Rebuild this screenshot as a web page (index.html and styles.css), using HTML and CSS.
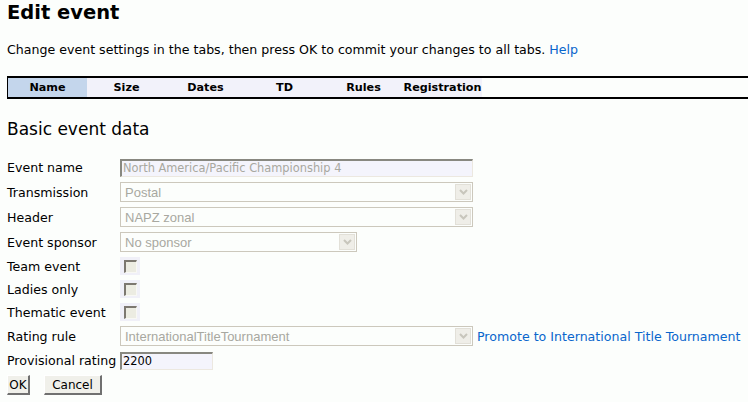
FILE: index.html
```html
<!DOCTYPE html>
<html>
<head>
<meta charset="utf-8">
<link rel="stylesheet" href="styles.css">
</head>
<body>
<h1 class="title">Edit event</h1>
<p class="intro">Change event settings in the tabs, then press OK to commit your changes to all tabs. <a class="link" href="#">Help</a></p>
<div class="tabs">
  <div class="tab active">Name</div>
  <div class="tab">Size</div>
  <div class="tab">Dates</div>
  <div class="tab">TD</div>
  <div class="tab">Rules</div>
  <div class="tab">Registration</div>
</div>
<h2 class="section">Basic event data</h2>
<div class="form">
  <div class="row"><span class="label">Event name</span><span class="field text wide">North America/Pacific Championship 4</span></div>
  <div class="row sel"><span class="label">Transmission</span><span class="field select wide"><span class="val">Postal</span><span class="arrow"><svg width="9" height="6" viewBox="0 0 9 6"><path d="M1 1 L4.5 4.5 L8 1" fill="none" stroke="#c8c6bc" stroke-width="2"/></svg></span></span></div>
  <div class="row sel"><span class="label">Header</span><span class="field select wide"><span class="val">NAPZ zonal</span><span class="arrow"><svg width="9" height="6" viewBox="0 0 9 6"><path d="M1 1 L4.5 4.5 L8 1" fill="none" stroke="#c8c6bc" stroke-width="2"/></svg></span></span></div>
  <div class="row sel"><span class="label">Event sponsor</span><span class="field select mid"><span class="val">No sponsor</span><span class="arrow"><svg width="9" height="6" viewBox="0 0 9 6"><path d="M1 1 L4.5 4.5 L8 1" fill="none" stroke="#c8c6bc" stroke-width="2"/></svg></span></span></div>
  <div class="row chk"><span class="label">Team event</span><span class="check"><span class="box"></span></span></div>
  <div class="row chk"><span class="label">Ladies only</span><span class="check"><span class="box"></span></span></div>
  <div class="row chk"><span class="label">Thematic event</span><span class="check"><span class="box"></span></span></div>
  <div class="row sel"><span class="label">Rating rule</span><span class="field select wide"><span class="val">InternationalTitleTournament</span><span class="arrow"><svg width="9" height="6" viewBox="0 0 9 6"><path d="M1 1 L4.5 4.5 L8 1" fill="none" stroke="#c8c6bc" stroke-width="2"/></svg></span></span><a class="link promote" href="#">Promote to International Title Tournament</a></div>
  <div class="row"><span class="label">Provisional rating</span><span class="field text short active-input">2200</span></div>
</div>
<div class="buttons">
  <button class="btn ok">OK</button>
  <button class="btn cancel">Cancel</button>
</div>
</body>
</html>
```
FILE: styles.css
```css
html, body {
  margin: 0;
  padding: 0;
  background: #fcfefc;
}
body {
  padding-left: 7px;
  font-family: "DejaVu Sans", Verdana, sans-serif;
  color: #000;
  overflow: hidden;
}
.title {
  margin: 0;
  padding-top: 1px;
  font-size: 19.5px;
  font-weight: bold;
  line-height: 24px;
  height: 24px;
}
.intro {
  margin: 17px 0 0 0;
  font-size: 12.6px;
  line-height: 16px;
}
.link {
  color: #0a66cc;
  text-decoration: none;
}
.tabs {
  margin-top: 18px;
  display: flex;
  border-top: 2px solid #000;
  border-bottom: 2px solid #000;
  border-left: 1px solid #000;
  height: 19px;
}
.tab {
  width: 79px;
  flex: none;
  text-align: center;
  font-size: 11.2px;
  font-weight: bold;
  line-height: 19px;
  background: #f2f2fa;
}
.tab.active {
  background: #c4d6ec;
}
.section {
  margin: 19px 0 0 0;
  font-size: 17px;
  font-weight: normal;
  line-height: 22px;
}
.form {
  margin-top: 18px;
  display: flex;
  flex-direction: column;
  gap: 5px;
}
.row {
  display: flex;
  align-items: center;
  height: 19px;
  font-size: 12.6px;
}
.row.sel { height: 20px; }
.row.chk { height: 18px; }
.label {
  width: 113px;
  flex: none;
  white-space: nowrap;
}
.field {
  box-sizing: border-box;
  height: 20px;
  display: flex;
  align-items: center;
  color: #a8a8a0;
  background: #fcfefc;
}
.field.text {
  height: 18px;
  background: #f4f4fc;
  border-top: 2px solid #888880;
  border-left: 2px solid #888880;
  border-right: 1px solid #ece8e0;
  border-bottom: 1px solid #ece8e0;
  padding-left: 1px;
  font-size: 11.4px;
}
.field.select {
  border: 1px solid #ccc8bc;
  padding-left: 4px;
  justify-content: space-between;
  padding-right: 1px;
  font-family: "Liberation Sans", Arial, sans-serif;
  font-size: 13px;
}
.wide { width: 353px; }
.mid { width: 237px; }
.short { width: 93px; }
.active-input { color: #000; }
.arrow {
  box-sizing: border-box;
  width: 16px;
  height: 16px;
  background: #efeee8;
  border: 1px solid #e2e0d8;
  display: flex;
  align-items: center;
  justify-content: center;
}
.check {
  width: 20px;
  height: 18px;
  background: #f0f0f8;
  display: flex;
  align-items: center;
  justify-content: center;
}
.box {
  box-sizing: border-box;
  width: 13px;
  height: 13px;
  background: #ecece2;
  border-top: 2px solid #7c7870;
  border-left: 2px solid #7c7870;
  border-right: 1px solid #f8f8f4;
  border-bottom: 1px solid #f8f8f4;
}
.promote {
  margin-left: 4px;
  white-space: nowrap;
}
.buttons {
  margin-top: 5px;
  display: flex;
  gap: 14px;
}
.btn {
  box-sizing: border-box;
  height: 20px;
  padding: 0;
  font-family: "DejaVu Sans", Verdana, sans-serif;
  font-size: 12px;
  background: #f0f0ea;
  border-top: 1px solid #fff;
  border-left: 1px solid #fff;
  border-right: 2px solid #707070;
  border-bottom: 2px solid #707070;
  color: #000;
}
.ok { width: 23px; }
.cancel {
  width: 58px;
}
```
